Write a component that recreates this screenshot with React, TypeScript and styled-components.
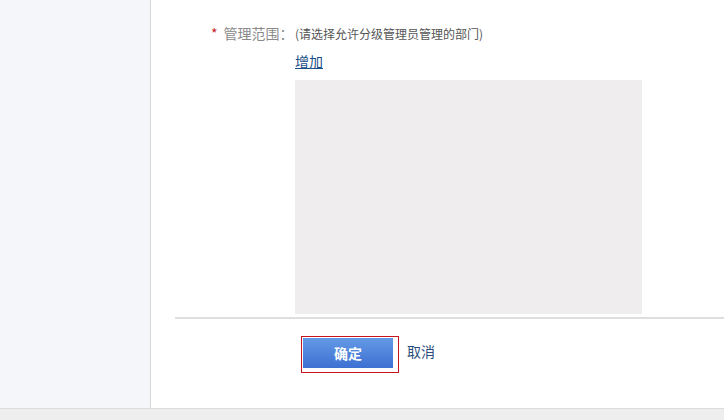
import React from 'react';
import styled, { createGlobalStyle } from 'styled-components';

const GlobalStyle = createGlobalStyle`
  html, body {
    margin: 0;
    padding: 0;
    height: 100%;
  }
  body {
    font-family: "Noto Sans CJK SC", "Liberation Sans", sans-serif;
    background: #fff;
  }
`;

const Page = styled.div`
  width: 724px;
  height: 420px;
  display: flex;
  flex-direction: column;
  overflow: hidden;
`;

const Body = styled.div`
  flex: 0 0 408px;
  display: flex;
`;

const SideBar = styled.div`
  width: 150px;
  background: #f5f6fa;
  border-right: 1px solid #d6d6d6;
`;

const Main = styled.div`
  flex: 1;
  background: #fff;
  display: flex;
  flex-direction: column;
`;

const FormRow = styled.div`
  display: flex;
  padding: 23px 0 0 60px;
  height: 317px;
  box-sizing: border-box;
`;

const Label = styled.div`
  width: 84px;
  flex: 0 0 84px;
  font-size: 14px;
  line-height: 20px;
  color: #8a8a8a;
  white-space: nowrap;
`;

const Star = styled.span`
  color: #c8252c;
  margin-right: 6px;
`;

const Field = styled.div`
  display: flex;
  flex-direction: column;
`;

const Hint = styled.div`
  font-size: 12px;
  line-height: 20px;
  color: #555;
  margin-top: 1px;
`;

const AddLink = styled.a`
  font-size: 14px;
  line-height: 20px;
  color: #1b4f86;
  text-decoration: underline;
  margin-top: 7px;
  width: fit-content;
  cursor: pointer;
`;

const ListBox = styled.div`
  width: 347px;
  height: 234px;
  margin-top: 9px;
  background: #efeded;
`;

const Divider = styled.div`
  margin-left: 24px;
  border-top: 2px solid #dedede;
`;

const Actions = styled.div`
  display: flex;
  align-items: flex-start;
  padding: 17px 0 0 150px;
  gap: 8px;
`;

const Focus = styled.div`
  width: 98px;
  height: 37px;
  box-sizing: border-box;
  border: 1px solid #c8141c;
  padding: 1px;
`;

const PrimaryButton = styled.button`
  width: 90px;
  height: 30px;
  border: none;
  padding: 0;
  background: linear-gradient(#6499e6, #3d70d2);
  color: #fff;
  font-family: inherit;
  font-weight: bold;
  font-size: 14px;
  cursor: pointer;
`;

const CancelLink = styled.a`
  font-size: 14px;
  line-height: 20px;
  margin-top: 5px;
  color: #2a4e7b;
  cursor: pointer;
`;

const Footer = styled.div`
  flex: 1;
  background: #eeeeee;
  border-top: 1px solid #dcdcdc;
`;

export default function App(): React.ReactElement {
  return (
    <Page>
      <GlobalStyle />
      <Body>
        <SideBar />
        <Main>
          <FormRow>
            <Label>
              <Star>*</Star>管理范围：
            </Label>
            <Field>
              <Hint>(请选择允许分级管理员管理的部门)</Hint>
              <AddLink>增加</AddLink>
              <ListBox />
            </Field>
          </FormRow>
          <Divider />
          <Actions>
            <Focus>
              <PrimaryButton>确定</PrimaryButton>
            </Focus>
            <CancelLink>取消</CancelLink>
          </Actions>
        </Main>
      </Body>
      <Footer />
    </Page>
  );
}
